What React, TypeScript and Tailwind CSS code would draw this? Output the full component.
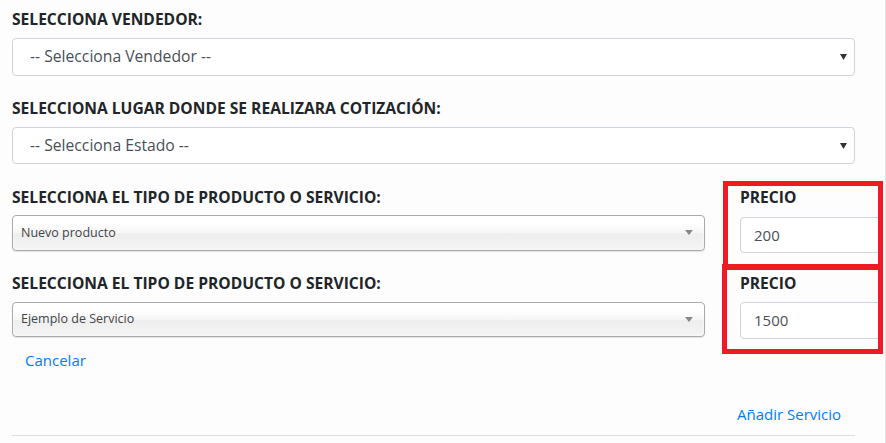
import React from "react";

const font = { fontFamily: '"Open Sans", "Noto Sans", sans-serif' };

function BsSelect({ text, h }: { text: string; h: string }) {
  return (
    <div
      className={`relative flex items-center w-[843px] ${h} rounded-[4px] border border-[#ced4da] bg-white pl-[17px] text-[15.7px] text-[#495057]`}
    >
      <span>{text}</span>
      <svg className="absolute right-[7px] top-1/2 -translate-y-1/2" width="7" height="6" viewBox="0 0 7 6">
        <path d="M0 0 H7 L3.5 6 Z" fill="#333" />
      </svg>
    </div>
  );
}

function ChosenSelect({ text, h }: { text: string; h: string }) {
  return (
    <div
      className={`relative flex items-center w-[693px] ${h} rounded-[4px] border border-[#aaa] pl-[8px] text-[12.5px] text-[#444] bg-[linear-gradient(#ffffff_20%,#f6f6f6_50%,#eeeeee_52%,#f4f4f4_100%)] shadow-[inset_0_0_3px_#fff,0_1px_1px_rgba(0,0,0,0.1)]`}
    >
      <span>{text}</span>
      <svg className="absolute right-[11px] top-1/2 -translate-y-[3px]" width="8" height="5" viewBox="0 0 8 5">
        <path d="M0 0 H8 L4 5 Z" fill="#888" />
      </svg>
    </div>
  );
}

function Label({ children, className = "" }: { children: React.ReactNode; className?: string }) {
  return (
    <div className={`h-[20px] leading-[20px] text-[15.6px] font-bold text-[#212529] whitespace-nowrap ${className}`}>
      {children}
    </div>
  );
}

function PriceInput({ value, h, className = "" }: { value: string; h: string; className?: string }) {
  return (
    <div
      className={`flex items-center w-[142px] ${h} rounded-[4px] border border-[#ced4da] bg-white pl-[13px] text-[15px] text-[#495057] ${className}`}
    >
      {value}
    </div>
  );
}

export default function App() {
  return (
    <div
      style={font}
      className="relative w-[886px] h-[443px] overflow-hidden bg-[#fdfdfd] border-r border-[#e6e6e6] pl-[12px] pt-[9px]"
    >
      <Label>SELECCIONA VENDEDOR:</Label>
      <div className="mt-[9px]">
        <BsSelect text="-- Selecciona Vendedor --" h="h-[38px]" />
      </div>
      <Label className="mt-[22px]">SELECCIONA LUGAR DONDE SE REALIZARA COTIZACIÓN:</Label>
      <div className="mt-[9px]">
        <BsSelect text="-- Selecciona Estado --" h="h-[37px]" />
      </div>

      <div className="mt-[23px] flex">
        <div className="w-[693px] flex flex-col">
          <Label>SELECCIONA EL TIPO DE PRODUCTO O SERVICIO:</Label>
          <div className="mt-[8px]">
            <ChosenSelect text="Nuevo producto" h="h-[36px]" />
          </div>
          <Label className="mt-[22px]">SELECCIONA EL TIPO DE PRODUCTO O SERVICIO:</Label>
          <div className="mt-[9px]">
            <ChosenSelect text="Ejemplo de Servicio" h="h-[35px]" />
          </div>
          <div className="mt-[13px] ml-[13px] h-[20px] leading-[20px] text-[15px] text-[#007bff]">Cancelar</div>
        </div>
        <div className="ml-[35px] flex flex-col">
          <Label>PRECIO</Label>
          <PriceInput value="200" h="h-[36px]" className="mt-[10px]" />
          <Label className="mt-[20px]">PRECIO</Label>
          <PriceInput value="1500" h="h-[37px]" className="mt-[9px]" />
        </div>
      </div>

      <div className="mt-[34px] pl-[725px] h-[20px] leading-[20px] text-[15px] text-[#007bff] whitespace-nowrap">
        Añadir Servicio
      </div>
      <div className="mt-[11px] w-[843px] border-t border-[#dedede]" />

      <div className="absolute left-[723px] top-[181px] w-[160px] h-[89px] border-[5px] border-[#ed1c24]" />
      <div className="absolute left-[722px] top-[264px] w-[161px] h-[90px] border-[5px] border-[#ed1c24]" />
    </div>
  );
}
